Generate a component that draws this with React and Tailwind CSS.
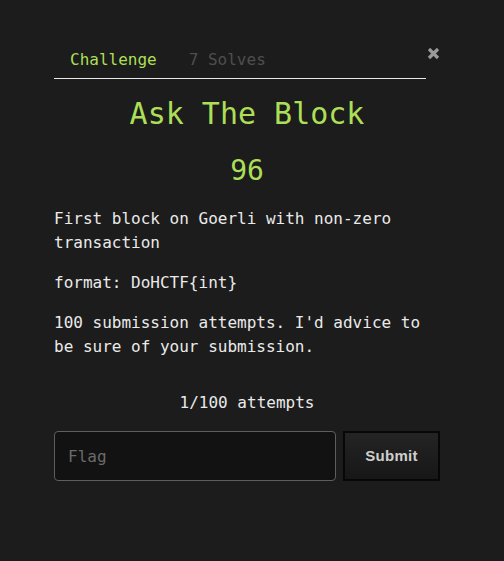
import React, { useState } from "react";

const mono = { fontFamily: '"DejaVu Sans Mono", "Liberation Mono", monospace' };

export default function App() {
  const [flag, setFlag] = useState("");

  return (
    <div className="min-h-screen bg-[#1c1c1c] text-[#eaeaea]" style={mono}>
      <div className="w-[386px] ml-[54px] pt-[40px]">
        {/* tabs + close */}
        <div className="flex items-start">
          <ul className="flex w-[372px] border-b border-[#e8e8e8] text-[16px] leading-[24px]">
            <li className="px-4 pt-[8px] pb-[6px] text-[#acdf57]">Challenge</li>
            <li className="px-4 pt-[8px] pb-[6px] text-[#4e4e4e]">7 Solves</li>
          </ul>
          <button className="ml-[1px] mt-[7px] w-[13px] h-[13px]" aria-label="close">
            <svg width="13" height="13" viewBox="0 0 13 13">
              <path d="M2 2 L11 11 M11 2 L2 11" stroke="#9a9a9a" strokeWidth="3.2" />
            </svg>
          </button>
        </div>

        <h1 className="mt-[17px] text-center text-[30px] leading-[36px] text-[#acdf57]">
          Ask The Block
        </h1>
        <h2 className="mt-[22px] text-center text-[28px] leading-[34px] text-[#acdf57]">96</h2>

        <div className="mt-[19px] text-[16px] leading-[24px] space-y-4">
          <p>First block on Goerli with non-zero transaction</p>
          <p>format: DoHCTF{"{"}int{"}"}</p>
          <p>100 submission attempts. I'd advice to be sure of your submission.</p>
        </div>

        <p className="mt-[32px] text-center text-[16px] leading-[24px]">1/100 attempts</p>

        <form className="mt-[16px] flex gap-[7px]" onSubmit={(e) => e.preventDefault()}>
          <input
            value={flag}
            onChange={(e) => setFlag(e.target.value)}
            placeholder="Flag"
            className="w-[282px] h-[50px] rounded-[4px] border border-[#5e5e5e] bg-[#121212] px-[13px] text-[16px] text-[#eaeaea] placeholder:text-[#6a6a6a] outline-none"
            style={mono}
          />
          <button
            type="submit"
            className="w-[97px] h-[50px] border-2 border-[#070707] bg-gradient-to-b from-[#242424] to-[#171717] text-[15px] font-bold text-[#cfcfcf] tracking-[0.3px]"
            style={{ fontFamily: '"Liberation Sans", Arial, sans-serif' }}
          >
            Submit
          </button>
        </form>
      </div>
    </div>
  );
}
